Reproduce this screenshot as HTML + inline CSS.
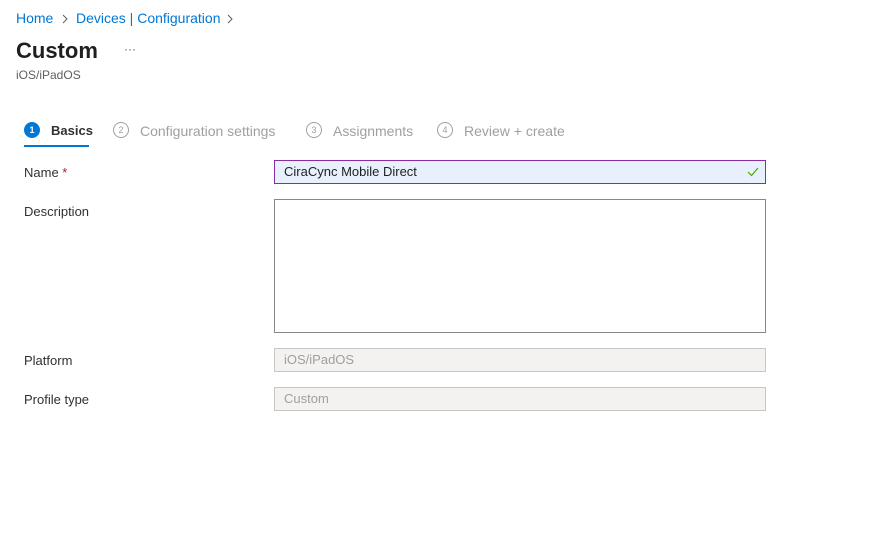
<!DOCTYPE html>
<html><head><style>
body{margin:0;width:882px;height:559px;background:#fff;font-family:"Liberation Sans",sans-serif;color:#323130;position:relative;overflow:hidden}
.a{position:absolute;white-space:nowrap}
.bc{color:#0078d4;font-size:14px}
.step{font-size:14px;color:#a19f9d}
.circ{position:absolute;width:16px;height:16px;border-radius:50%;border:1px solid #a19f9d;box-sizing:border-box;font-size:9px;text-align:center;line-height:14px;color:#a19f9d}
.lbl{font-size:13px;color:#323130}
.box{position:absolute;box-sizing:border-box;border:1px solid #8a8886;background:#fff}
.dis{background:#f3f2f1;border-color:#c8c6c4;color:#a19f9d;font-size:13px;padding-left:9px;line-height:21px}
</style></head><body>
<div class="a bc" style="left:16px;top:10px">Home</div>
<svg class="a" style="left:62px;top:14px" width="6" height="10" viewBox="0 0 6 10"><path d="M1 1l4 4-4 4" fill="none" stroke="#605e5c" stroke-width="1"/></svg>
<div class="a bc" style="left:76px;top:10px">Devices | Configuration</div>
<svg class="a" style="left:227px;top:14px" width="6" height="10" viewBox="0 0 6 10"><path d="M1 1l4 4-4 4" fill="none" stroke="#605e5c" stroke-width="1"/></svg>
<div class="a" style="left:16px;top:38px;font-size:22px;font-weight:bold;color:#201f1e">Custom</div>
<div class="a" style="left:124px;top:42px;font-size:12px;color:#605e5c">···</div>
<div class="a" style="left:16px;top:68px;font-size:12px;color:#605e5c">iOS/iPadOS</div>

<div class="circ" style="left:24px;top:122px;background:#0078d4;border-color:#0078d4;color:#fff;font-weight:bold">1</div>
<div class="a" style="left:51px;top:123px;font-size:13px;font-weight:bold;color:#323130">Basics</div>
<div class="a" style="left:24px;top:145px;width:65px;height:2px;background:#0078d4"></div>
<div class="circ" style="left:113px;top:122px">2</div>
<div class="a step" style="left:140px;top:123px">Configuration settings</div>
<div class="circ" style="left:306px;top:122px">3</div>
<div class="a step" style="left:333px;top:123px">Assignments</div>
<div class="circ" style="left:437px;top:122px">4</div>
<div class="a step" style="left:464px;top:123px">Review + create</div>

<div class="a lbl" style="left:24px;top:165px">Name <span style="color:#a4262c">*</span></div>
<div class="box" style="left:274px;top:160px;width:492px;height:24px;border-color:#8a2da5;background:#e8f0fe;font-size:13px;padding-left:9px;line-height:22px;color:#201f1e">CiraCync Mobile Direct<svg style="position:absolute;right:6px;top:6px" width="12" height="10" viewBox="0 0 12 10"><path d="M1 5l3.5 3.5L11 1" fill="none" stroke="#57a300" stroke-width="1.2"/></svg></div>
<div class="a lbl" style="left:24px;top:204px">Description</div>
<div class="box" style="left:274px;top:199px;width:492px;height:134px"></div>
<div class="a lbl" style="left:24px;top:353px">Platform</div>
<div class="box dis" style="left:274px;top:348px;width:492px;height:24px">iOS/iPadOS</div>
<div class="a lbl" style="left:24px;top:392px">Profile type</div>
<div class="box dis" style="left:274px;top:387px;width:492px;height:24px">Custom</div>
</body></html>
